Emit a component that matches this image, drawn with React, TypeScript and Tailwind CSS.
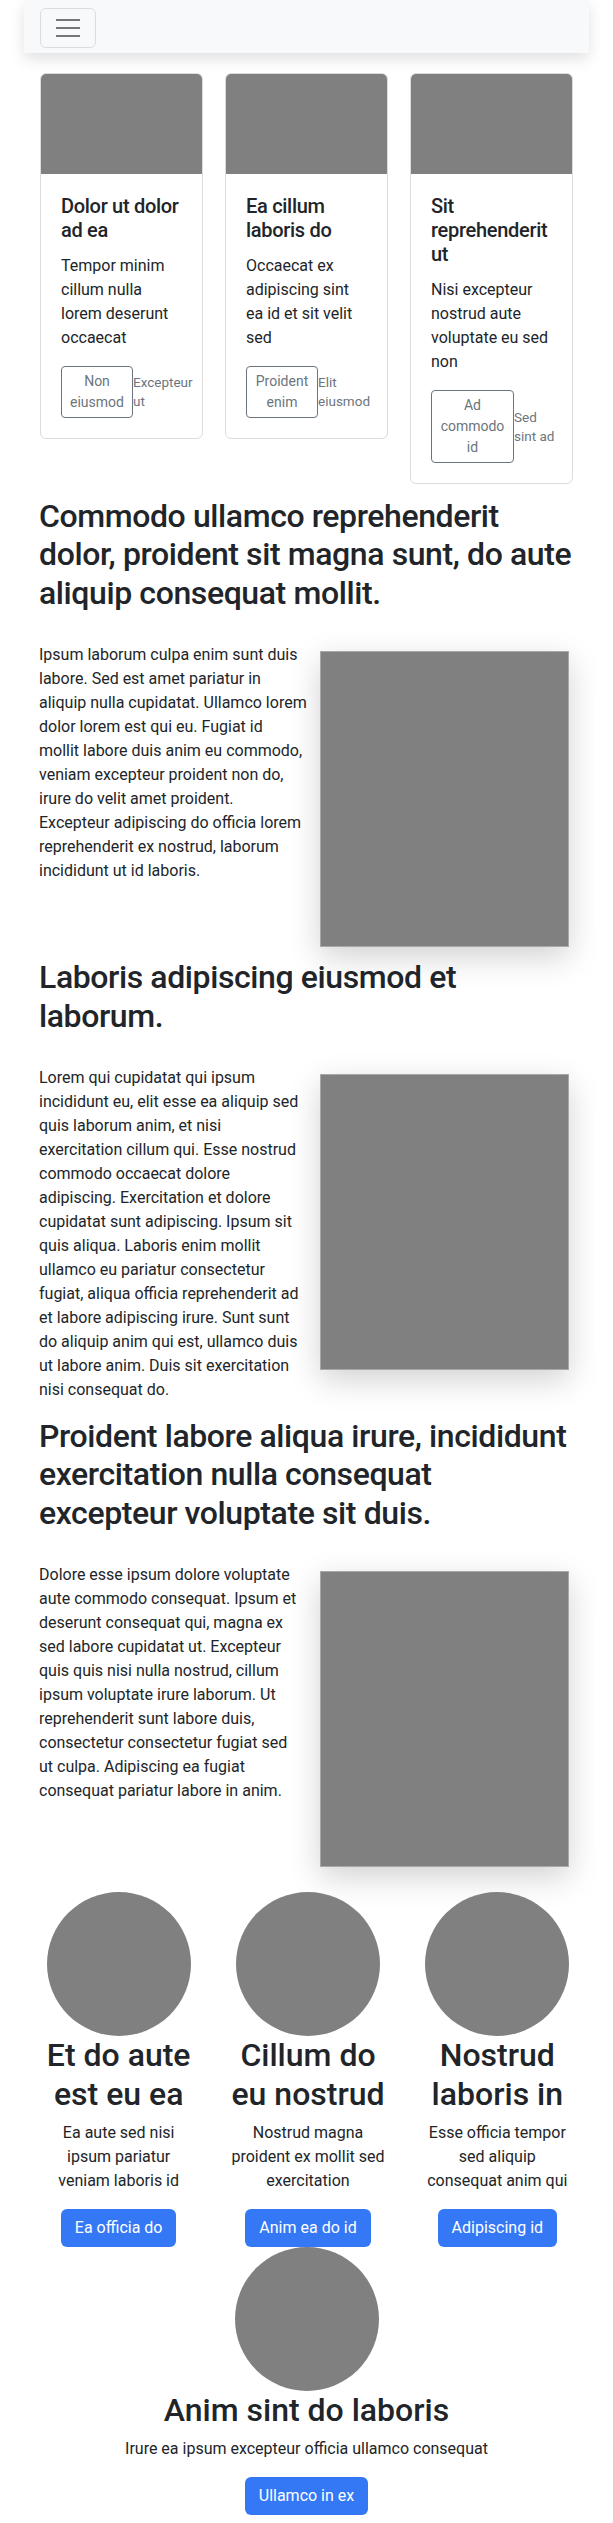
import React from 'react'

const cards = [
  { title: 'Dolor ut dolor ad ea', text: 'Tempor minim cillum nulla lorem deserunt occaecat', btn: 'Non eiusmod', btnW: 'w-[72px]', note: 'Excepteur ut', noteW: 'w-[60px]' },
  { title: 'Ea cillum laboris do', text: 'Occaecat ex adipiscing sint ea id et sit velit sed', btn: 'Proident enim', btnW: 'w-[72px]', note: 'Elit eiusmod', noteW: 'w-[54px]' },
  { title: 'Sit reprehenderit ut', text: 'Nisi excepteur nostrud aute voluptate eu sed non', btn: 'Ad commodo id', btnW: 'w-[83px]', note: 'Sed sint ad', noteW: 'w-[42px]' },
]

// line breaks follow the reference wrapping
const features = [
  {
    heading: ['Commodo ullamco reprehenderit', 'dolor, proident sit magna sunt, do aute', 'aliquip consequat mollit.'],
    body: [
      'Ipsum laborum culpa enim sunt duis',
      'labore. Sed est amet pariatur in',
      'aliquip nulla cupidatat. Ullamco lorem',
      'dolor lorem est qui eu. Fugiat id',
      'mollit labore duis anim eu commodo,',
      'veniam excepteur proident non do,',
      'irure do velit amet proident.',
      'Excepteur adipiscing do officia lorem',
      'reprehenderit ex nostrud, laborum',
      'incididunt ut id laboris.',
    ],
  },
  {
    heading: ['Laboris adipiscing eiusmod et', 'laborum.'],
    body: [
      'Lorem qui cupidatat qui ipsum',
      'incididunt eu, elit esse ea aliquip sed',
      'quis laborum anim, et nisi',
      'exercitation cillum qui. Esse nostrud',
      'commodo occaecat dolore',
      'adipiscing. Exercitation et dolore',
      'cupidatat sunt adipiscing. Ipsum sit',
      'quis aliqua. Laboris enim mollit',
      'ullamco eu pariatur consectetur',
      'fugiat, aliqua officia reprehenderit ad',
      'et labore adipiscing irure. Sunt sunt',
      'do aliquip anim qui est, ullamco duis',
      'ut labore anim. Duis sit exercitation',
      'nisi consequat do.',
    ],
  },
  {
    heading: ['Proident labore aliqua irure, incididunt', 'exercitation nulla consequat', 'excepteur voluptate sit duis.'],
    body: [
      'Dolore esse ipsum dolore voluptate',
      'aute commodo consequat. Ipsum et',
      'deserunt consequat qui, magna ex',
      'sed labore cupidatat ut. Excepteur',
      'quis quis nisi nulla nostrud, cillum',
      'ipsum voluptate irure laborum. Ut',
      'reprehenderit sunt labore duis,',
      'consectetur consectetur fugiat sed',
      'ut culpa. Adipiscing ea fugiat',
      'consequat pariatur labore in anim.',
    ],
  },
]

const people = [
  { name: 'Et do aute est eu ea', text: 'Ea aute sed nisi ipsum pariatur veniam laboris id', btn: 'Ea officia do' },
  { name: 'Cillum do eu nostrud', text: 'Nostrud magna proident ex mollit sed exercitation', btn: 'Anim ea do id' },
  { name: 'Nostrud laboris in', text: 'Esse officia tempor sed aliquip consequat anim qui', btn: 'Adipiscing id' },
]

function Lines({ lines }: { lines: string[] }) {
  return (
    <>
      {lines.map((l, i) => (
        <span key={i} className="block whitespace-nowrap">{l}</span>
      ))}
    </>
  )
}

function Person({ name, text, btn, wide }: { name: string; text: string; btn: string; wide?: boolean }) {
  return (
    <div className="flex flex-col items-center text-center">
      <div className="w-[144px] h-[144px] rounded-full bg-[#808080]" />
      <h2 className="text-[32px] leading-[38.4px] font-medium mb-[8px] px-[12px]">{name}</h2>
      <p className={wide ? 'mb-[16px]' : 'mb-[16px] w-[155px]'}>{text}</p>
      <button className="bg-[#3478f6] text-white text-[16px] leading-[24px] px-[14px] py-[7px] rounded-[6px]">{btn}</button>
    </div>
  )
}

export default function App() {
  return (
    <div className="w-[613px] bg-white text-[#212529] text-[16px] leading-[24px] font-['Roboto','Liberation_Sans',sans-serif] pb-[8px]">
      <nav className="mx-[24px] h-[53px] bg-[#f8f9fa] shadow-[0_6px_14px_rgba(0,0,0,0.12)] pt-[8px] px-[16px]">
        <button className="w-[56px] h-[40px] border border-[#dcdcdc] rounded-[6px] flex items-center justify-center">
          <svg width="24" height="20" viewBox="0 0 24 20">
            <path d="M0 2h24M0 10h24M0 18h24" stroke="#777" strokeWidth="2" />
          </svg>
        </button>
      </nav>

      <div className="mt-[20px] mx-[40px] grid grid-cols-3 gap-[22px] items-start">
        {cards.map((c) => (
          <div key={c.title} className="border border-[#dcdcdc] rounded-[6px]">
            <div className="h-[100px] bg-[#808080] rounded-t-[5px]" />
            <div className="p-[20px]">
              <h5 className="text-[20px] leading-[24px] font-medium tracking-[-0.3px] mb-[12px]">{c.title}</h5>
              <p className="mb-[16px]">{c.text}</p>
              <div className="flex items-center">
                <button className={`${c.btnW} shrink-0 border border-[#6c757d] text-[#6c757d] text-[14px] leading-[21px] px-[8px] py-[4px] rounded-[4px]`}>
                  {c.btn}
                </button>
                <small className={`${c.noteW} shrink-0 text-[13.5px] leading-[19px] text-[#6c757d]`}>{c.note}</small>
              </div>
            </div>
          </div>
        ))}
      </div>

      <div className="mt-[13px] px-[39px]">
        {features.map((f) => (
          <section key={f.heading[0]}>
            <h2 className="text-[32px] leading-[38.4px] font-medium tracking-[-0.4px] mb-[31px]">
              <Lines lines={f.heading} />
            </h2>
            <div className="flex items-start">
              <p className="w-[272px] shrink-0 mb-[15px]">
                <Lines lines={f.body} />
              </p>
              <div className="ml-[9px] mt-[8px] mb-[11px] w-[249px] h-[296px] bg-[#808080] border border-[#a8a8a8] shadow-[0_10px_30px_rgba(0,0,0,0.18)]" />
            </div>
          </section>
        ))}
      </div>

      <div className="mt-[14px] ml-[24px] w-[568px] grid grid-cols-3">
        {people.map((p) => (
          <Person key={p.name} {...p} />
        ))}
      </div>
      <Person name="Anim sint do laboris" text="Irure ea ipsum excepteur officia ullamco consequat" btn="Ullamco in ex" wide />
    </div>
  )
}
